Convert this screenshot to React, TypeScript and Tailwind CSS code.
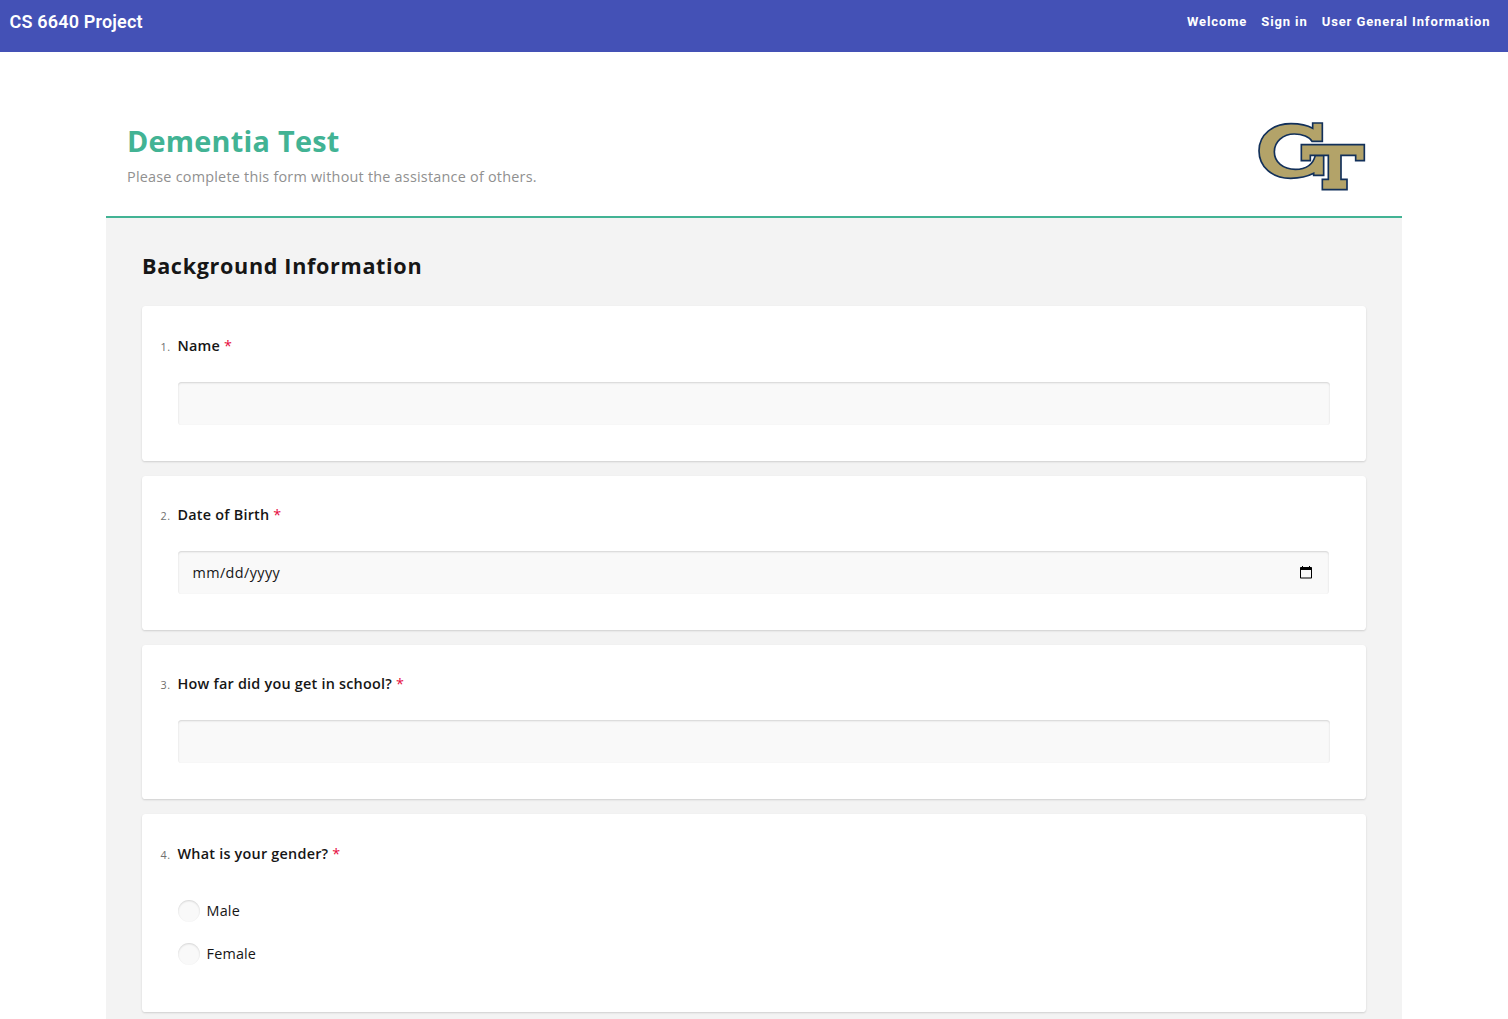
import type { ReactNode } from "react";

function GtLogo() {
  return (
    <svg viewBox="0 0 375 255" className="h-[85px] w-[125px]" aria-label="GT">
      <g fill="#b3a369" stroke="#12305a" strokeWidth="5" strokeLinejoin="miter">
        <path d="M188 33H217V88H186C179 75 157 66 133 66C99 66 73 89 73 119C73 150 99 172 136 172C168 172 189 158 196 130H221V190H191V184C172 194 148 199 122 199C67 199 27 165 27 116C27 68 69 35 123 35C149 35 171 39 188 49Z" />
        <path d="M154 98H343V146H317V130H273V202H291V233H217V202H235V130H181V146H154Z" />
      </g>
    </svg>
  );
}

function Question({ number, title, children, tall }: { number: number; title: string; children: ReactNode; tall?: boolean }) {
  return (
    <section
      className={`${tall ? "h-[198px] pt-[29.2px]" : "h-[154.7px] pt-[28.7px]"} shrink-0 rounded-[3.6px] bg-white pl-[18px] pr-9 shadow-[0_1px_2px_rgba(0,0,0,0.15)]`}
    >
      <h5 className="flex h-[21.6px] items-center text-[14.4px] font-semibold tracking-[0.23px] text-[#161616]">
        <span className="w-[17.5px] pl-[0.6px] pt-[2px] text-[10.8px] font-normal tracking-[0.5px] text-[#707070]">{number}.</span>
        <span className="whitespace-pre">{title} </span>
        <span className="font-normal text-[#e60a3e]">*</span>
      </h5>
      <div className={`pl-[18px] ${tall ? "pt-[24.8px]" : "pt-[25.3px]"}`}>{children}</div>
    </section>
  );
}

const inset = "bg-[#f9f9f9] shadow-[inset_0_1px_2px_rgba(0,0,0,0.15)]";

function Choice({ label }: { label: string }) {
  return (
    <label className="flex h-[43.2px] items-center gap-[7px] text-[14.4px] tracking-[0.16px] text-[#161616]">
      <span className={`size-[21.6px] rounded-full ${inset}`} />
      <span>{label}</span>
    </label>
  );
}

export default function App() {
  return (
    <div className="h-[1019px] overflow-hidden bg-white font-['Open_Sans',sans-serif]">
      <nav className="flex h-[52px] items-start justify-between bg-[#4451b6] pl-[9.5px] pr-[17.6px] font-['Roboto',sans-serif] text-white">
        <span className="pt-[8px] text-[18px] leading-[27px] font-semibold tracking-[0.18px]">CS 6640 Project</span>
        <div className="flex gap-[14px] pt-[12px] text-[13px] leading-[20px] font-bold tracking-[0.9px]">
          <span>Welcome</span>
          <span>Sign in</span>
          <span>User General Information</span>
        </div>
      </nav>
      <main className="mx-auto mt-[52px] w-[1296px]">
        <header className="flex h-[114px] items-start justify-between border-b-2 border-[#42b394] pl-[21px] pr-[27px]">
          <div className="pt-[17px]">
            <h3 className="text-[28.8px] leading-[40px] font-bold tracking-[0.25px] text-[#42b394]">Dementia Test</h3>
            <h5 className="mt-[5px] text-[14.4px] leading-[21.6px] tracking-[0.23px] text-[#909090]">
              Please complete this form without the assistance of others.
            </h5>
          </div>
          <div className="pt-2">
            <GtLogo />
          </div>
        </header>
        <div className="flex h-[801px] flex-col gap-[14.4px] overflow-hidden bg-[#f3f3f3] px-9 pt-[32px]">
          <h4 className="mb-[10.1px] text-[21.6px] leading-[32px] font-bold tracking-[0.66px] text-[#161616]">
            Background Information
          </h4>
          <Question number={1} title="Name">
            <div className={`h-[43.2px] rounded-[3.6px] ${inset}`} />
          </Question>
          <Question number={2} title="Date of Birth">
            <div className={`flex h-[43.2px] w-[1151px] items-center justify-between rounded-[3.6px] pl-[14.4px] pr-[17px] text-[14.4px] tracking-[0.42px] text-[#161616] ${inset}`}>
              <span>mm/dd/yyyy</span>
              <svg viewBox="0 0 12 13" className="h-[13px] w-3">
                <path d="M2 0h1v1h6V0h1v1h1.2q.8 0 .8.8v10q0 .8-.8.8H.8Q0 12.600 0 11.800v-10Q0 1 .8 1H2ZM1 4v7.600h10V4Z" fillRule="evenodd" fill="#000" />
              </svg>
            </div>
          </Question>
          <Question number={3} title="How far did you get in school?">
            <div className={`h-[43.2px] rounded-[3.6px] ${inset}`} />
          </Question>
          <Question number={4} title="What is your gender?" tall>
            <div>
              <Choice label="Male" />
              <Choice label="Female" />
            </div>
          </Question>
        </div>
      </main>
    </div>
  );
}
